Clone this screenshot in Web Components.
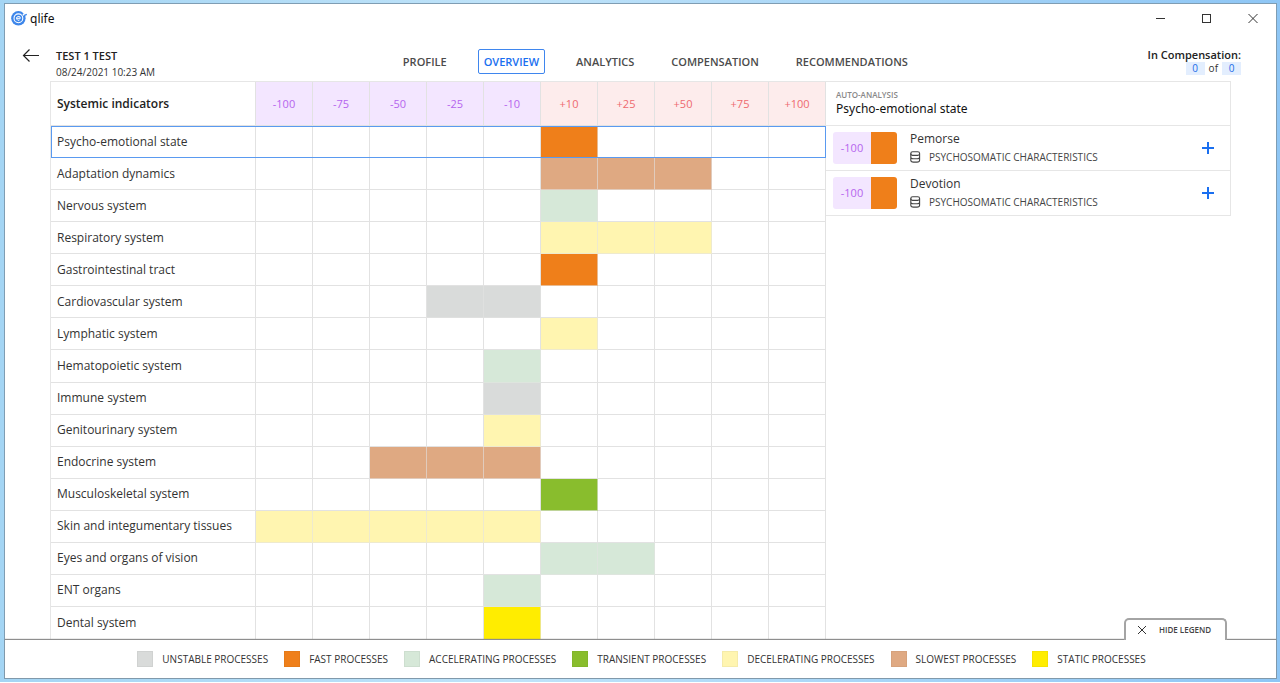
<!DOCTYPE html>
<html lang="en">
<head>
<meta charset="utf-8">
<title>qlife</title>
<style>
html { height: 100%; }
body { margin: 0; min-height: 100%; display: flex; font-family: "Open Sans", "Noto Sans", sans-serif; color: #333; background: #fff; }
</style>
</head>
<body>
<ql-app></ql-app>
<script>
const COLORS = {
  unstable: '#d9dbda', fast: '#ef7f1a', accelerating: '#d6e8d8', transient: '#89bd2d',
  decelerating: '#fff5b0', slowest: '#dfa982', static: '#ffed00'
};
const RESET = '*{box-sizing:border-box}button{font:inherit;color:inherit;background:none;border:0;padding:0;margin:0}a{color:inherit;text-decoration:none}';
function define(name, css, html) {
  customElements.define(name, class extends HTMLElement {
    connectedCallback() {
      if (this.shadowRoot) return;
      const root = this.attachShadow({ mode: 'open' });
      const t = document.createElement('template');
      t.innerHTML = '<style>' + RESET + css + '</style>' + (typeof html === 'function' ? html(this) : html);
      root.append(t.content.cloneNode(true));
    }
  });
}

/* Title bar with logo and window controls */
define('ql-titlebar', `
:host{display:flex;align-items:center;justify-content:space-between;height:29px;padding:0 15px 0 6px}
.brand{display:flex;align-items:center;gap:3px;font:12px/16px "Noto Sans","Open Sans",sans-serif;color:#111}
.win{display:flex;gap:30px}
button{width:16px;height:16px;display:flex}
svg{display:block}`,
`<div class="brand"><svg width="16" height="16" viewBox="0 0 16 16" aria-hidden="true">
<circle cx="7.4" cy="7.3" r="7.2" fill="#3d86ea"/><circle cx="7.4" cy="7.3" r="4.4" fill="none" stroke="#fff" stroke-width="1.1"/>
<path d="M5.6 7.300h3.800a1.900 1.900 0 1 0-.8 1.600" fill="none" stroke="#fff" stroke-width="1"/>
<path d="M12.200 4.200 15.500 1" stroke="#fff" stroke-width="2"/><path d="M13 4.600 15.800 3.400" stroke="#3d86ea" stroke-width="1.4"/></svg><span>qlife</span></div>
<div class="win">
<button aria-label="Minimize"><svg width="16" height="16"><path d="M3 7.5h9" stroke="#333"/></svg></button>
<button aria-label="Maximize"><svg width="16" height="16"><rect x="3.5" y="3.500" width="8" height="8" fill="none" stroke="#333"/></svg></button>
<button aria-label="Close"><svg width="16" height="16"><path d="M3.500 3l9 9m0-9l-9 9" stroke="#333" fill="none"/></svg></button>
</div>`);

/* Patient heading, section tabs, compensation counter */
define('ql-header', `
:host{display:flex;justify-content:space-between;height:48px;padding:0 35px 0 17px}
.who{display:flex;gap:16px;align-items:flex-start;padding-right:8px}
.who button{width:18px;height:18px;margin-top:13px}
svg{display:block}
h1{margin:15px 0 0;font-size:11px;line-height:16px;font-weight:600;color:#222}
time{display:block;font-size:10px;line-height:16px;color:#333}
.comp{text-align:right;padding-top:15px;font-size:11px;line-height:14px;font-weight:600;color:#222}
.nums{display:flex;justify-content:flex-end;gap:4px;font-size:10px;line-height:13px;font-weight:400;color:#333}
.nums b{font-weight:400;width:19px;text-align:center;background:#e3eefe;color:#1c6ce8}`,
`<div class="who"><button aria-label="Back"><svg width="18" height="18"><path d="M17 9.5H1.5M7.5 3.5l-6 6 6 6" fill="none" stroke="#222" stroke-width="1.2"/></svg></button>
<div><h1>TEST 1 TEST</h1><time>08/24/2021 10:23 AM</time></div></div>
<slot></slot>
<div class="comp">In Compensation:<div class="nums"><b>0</b><span>of</span><b>0</b></div></div>`);

define('ql-tabs', `:host{display:block;padding-top:16px}nav{display:flex;gap:25px}`, `<nav><slot></slot></nav>`);
define('ql-tab', `
:host{display:block}
a{display:block;padding:0 5px;height:25px;border:1px solid transparent;border-radius:2px;font-size:11px;line-height:24px;font-weight:600;color:#4b4b4b}
:host([active]) a{border-color:#3f86ee;color:#1a6ff0}`,
`<a href="#"><slot></slot></a>`);

/* Systemic indicator chart */
const SCALE = ['-100', '-75', '-50', '-25', '-10', '+10', '+25', '+50', '+75', '+100'];
const ROWS = [
  ['Psycho-emotional state', 'fast', 5, 5], ['Adaptation dynamics', 'slowest', 5, 7],
  ['Nervous system', 'accelerating', 5, 5], ['Respiratory system', 'decelerating', 5, 7],
  ['Gastrointestinal tract', 'fast', 5, 5], ['Cardiovascular system', 'unstable', 3, 4],
  ['Lymphatic system', 'decelerating', 5, 5], ['Hematopoietic system', 'accelerating', 4, 4],
  ['Immune system', 'unstable', 4, 4], ['Genitourinary system', 'decelerating', 4, 4],
  ['Endocrine system', 'slowest', 2, 4], ['Musculoskeletal system', 'transient', 5, 5],
  ['Skin and integumentary tissues', 'decelerating', 0, 4], ['Eyes and organs of vision', 'accelerating', 5, 6],
  ['ENT organs', 'accelerating', 4, 4], ['Dental system', 'static', 4, 4]
];
define('ql-indicators', `
:host{display:grid}
table{width:100%;height:100%;border-collapse:separate;border-spacing:0;table-layout:fixed;border-left:1px solid #e6e6e6;border-top:1px solid #e6e6e6}
th,td{padding:0;border-right:1px solid #e2e2e2;border-bottom:1px solid #e2e2e2;font-size:12px;line-height:16px;font-weight:400}
tbody th{text-align:left;padding-left:6px;color:#333;height:32px}
thead th{height:44px;font-size:11px}
thead th:first-child{width:205px;text-align:left;padding-left:6px;font-size:12px;font-weight:600;color:#222}
.neg{background:#f3e6ff;color:#b565ee}.pos{background:#fdecec;color:#ee6a6f}
.on{border-right-color:#e2e2e299;border-bottom-color:#e2e2e299}
tr.sel{outline:1px solid #5a9af0;outline-offset:-1px}
tbody tr:last-child>*{border-bottom:0}`,
() => `<table><thead><tr><th scope="col">Systemic indicators</th>${SCALE.map((s, i) => `<th scope="col" class="${i < 5 ? 'neg' : 'pos'}">${s}</th>`).join('')}</tr></thead>
<tbody>${ROWS.map((r, n) => `<tr${n ? '' : ' class="sel"'}><th scope="row">${r[0]}</th>${SCALE.map((s, i) =>
  i >= r[2] && i <= r[3] ? `<td class="on" style="background:${COLORS[r[1]]}"></td>` : '<td></td>').join('')}</tr>`).join('')}</tbody></table>`);

/* Analysis side panel */
define('ql-analysis', `
:host{display:block;align-self:start;border:1px solid #e6e6e6;border-left:0}
header{height:43px;padding:7px 0 0 10px}
small{display:block;font-size:8px;line-height:12px;font-weight:600;color:#888}
h2{margin:0;font:12px/16px "Noto Sans","Open Sans",sans-serif;color:#111}`,
`<header><small>AUTO-ANALYSIS</small><h2>Psycho-emotional state</h2></header><slot></slot>`);
define('ql-finding', `
:host{display:flex;align-items:center;height:45px;padding:0 15px 0 7px;border-top:1px solid #e6e6e6}
.badge{display:flex;width:64px;height:32px;border-radius:3px;overflow:hidden;font-size:11px;line-height:32px;color:#b565ee}
.badge span{width:38px;text-align:center;background:#f3e6ff}
.badge i{flex:1;background:#ef7f1a}
.text{flex:1;padding-left:13px}
.name{font-size:12px;line-height:18px;color:#333}
.cat{display:flex;align-items:center;gap:8px;font-size:10px;line-height:18px;color:#444}
svg{display:block}
button{width:16px;height:16px}`,
`<div class="badge"><span>-100</span><i></i></div>
<div class="text"><div class="name"><slot></slot></div><div class="cat"><svg width="11" height="12" viewBox="0 0 11 12"><g fill="none" stroke="#444" stroke-width="1.1"><rect x=".8" y=".8" width="8.8" height="3.6" rx="1.8"/><path d="M.8 2.6v6.6c0 1.2 1.2 1.9 2.6 1.9H7c1.4 0 2.6-.7 2.6-1.9V2.6M.8 6c0 1.2 1.2 1.8 2.6 1.8H7c1.4 0 2.6-.6 2.6-1.8"/></g></svg>PSYCHOSOMATIC CHARACTERISTICS</div></div>
<button aria-label="Add"><svg width="16" height="16"><path d="M3 8h12M9 2v12" stroke="#1a6ff0" stroke-width="2"/></svg></button>`);

/* Legend bar and its toggle */
define('ql-legend', `
:host{display:flex;position:relative;justify-content:center;align-items:center;gap:16px;height:39px;padding:0 0 1px 2px;border-top:1px solid #8e8e8e;background:#fff;box-shadow:0 0 1px #888}
.toggle{position:absolute;right:49px;bottom:100%;width:103px;height:22px;display:flex;align-items:center;gap:12px;padding-left:11px;background:#fff;border:2px solid #a4a4a4;border-bottom:0;border-radius:5px 5px 0 0;font-size:8px;line-height:12px;font-weight:600;color:#444}`,
`<slot></slot><button class="toggle"><svg width="10" height="10"><path d="M1 1l8 8m0-8l-8 8" stroke="#333" fill="none"/></svg>HIDE LEGEND</button>`);
define('ql-key', `
:host{display:flex;align-items:center;gap:9px;font-size:10px;line-height:16px;color:#333;white-space:nowrap}
i{width:16px;height:16px;border:1px solid #0000000a}`,
el => `<i style="background:${COLORS[el.getAttribute('kind')]}"></i><span><slot></slot></span>`);

define('ql-app', `
:host{flex:1;display:flex;padding:3px 3px 3px 4px;margin-bottom:1px;background:linear-gradient(90deg,#a4d5f4,#bfe3f9 40%,#8ec6f5)}
.window{flex:1;display:flex;flex-direction:column;background:#fff;border:1px solid #7f9db3}
main{flex:1;display:grid;grid-template-columns:776fr 405fr;padding:0 45px;min-height:0}`,
`<div class="window"><ql-titlebar></ql-titlebar>
<ql-header><ql-tabs><ql-tab>PROFILE</ql-tab><ql-tab active>OVERVIEW</ql-tab><ql-tab>ANALYTICS</ql-tab><ql-tab>COMPENSATION</ql-tab><ql-tab>RECOMMENDATIONS</ql-tab></ql-tabs></ql-header>
<main><ql-indicators></ql-indicators><ql-analysis><ql-finding>Pemorse</ql-finding><ql-finding>Devotion</ql-finding></ql-analysis></main>
<ql-legend><ql-key kind="unstable">UNSTABLE PROCESSES</ql-key><ql-key kind="fast">FAST PROCESSES</ql-key><ql-key kind="accelerating">ACCELERATING PROCESSES</ql-key><ql-key kind="transient">TRANSIENT PROCESSES</ql-key><ql-key kind="decelerating">DECELERATING PROCESSES</ql-key><ql-key kind="slowest">SLOWEST PROCESSES</ql-key><ql-key kind="static">STATIC PROCESSES</ql-key></ql-legend></div>`);
</script>
</body>
</html>
